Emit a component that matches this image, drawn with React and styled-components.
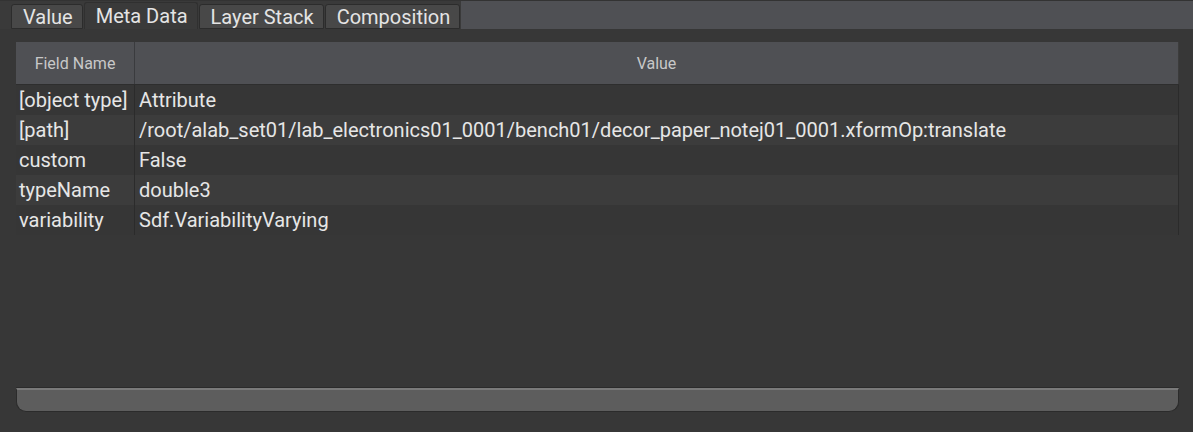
import styled, { createGlobalStyle } from 'styled-components';

const GlobalStyle = createGlobalStyle`
  html, body {
    margin: 0;
    padding: 0;
    background: #373737;
  }
  body {
    font-family: Roboto, "Liberation Sans", sans-serif;
  }
`;

const Page = styled.div`
  width: 1193px;
  height: 432px;
  background: #373737;
  display: flex;
  flex-direction: column;
  overflow: hidden;
`;

const TabBar = styled.div`
  display: flex;
  align-items: flex-end;
  height: 29px;
  padding-left: 11px;
  background: #3a3a3a;
  border-top: 1px solid #333;
  box-sizing: border-box;
`;

const Tab = styled.div`
  height: ${p => (p.$active ? '27px' : '25px')};
  box-sizing: border-box;
  padding: 0 9px 0 11px;
  margin-right: 1px;
  display: flex;
  align-items: center;
  font-size: 20px;
  color: #e4e4e4;
  background: ${p => (p.$active ? '#3a3a3a' : '#484848')};
  border: 1px solid ${p => (p.$active ? '#303030' : '#2c2c2c')};
  border-bottom: ${p => (p.$active ? 'none' : '1px solid #2c2c2c')};
  border-radius: 3px 3px 0 0;
  white-space: nowrap;
`;

const TabFill = styled.div`
  flex: 1;
  align-self: stretch;
  background: #4f5054;
`;

const Body = styled.div`
  flex: 1;
  display: flex;
  flex-direction: column;
  padding: 13px 14px 20px 16px;
  min-height: 0;
`;

const Table = styled.div`
  flex: 1;
  display: flex;
  flex-direction: column;
`;

const HeaderRow = styled.div`
  display: grid;
  grid-template-columns: 119px 1fr;
  height: 42px;
  background: #4f5054;
  border-bottom: 1px solid #2e2e2e;
  box-sizing: content-box;
`;

const HeaderCell = styled.div`
  display: flex;
  align-items: center;
  justify-content: center;
  font-size: 16px;
  color: #c8c8c8;
  border-right: 1px solid ${p => (p.$last ? '#3c3c3c' : '#3a3b3e')};
`;

const Row = styled.div`
  display: grid;
  grid-template-columns: 119px 1fr;
  height: 30px;
  background: ${p => (p.$alt ? '#3c3c3c' : '#363636')};
`;

const Cell = styled.div`
  display: flex;
  align-items: center;
  padding-left: ${p => (p.$first ? '3px' : '4px')};
  font-size: 20px;
  color: #e6e6e6;
  white-space: nowrap;
  border-right: 1px solid #2b2b2b;
`;

const ScrollBar = styled.div`
  height: 24px;
  box-sizing: border-box;
  background: #5d5d5d;
  border: 1px solid #2b2b2b;
  border-top: 2px solid #7a7a7a;
  border-radius: 0 0 10px 10px;
  box-shadow: 0 -1px 0 #2b2b2b;
`;

const rows = [
  ['[object type]', 'Attribute'],
  ['[path]', '/root/alab_set01/lab_electronics01_0001/bench01/decor_paper_notej01_0001.xformOp:translate'],
  ['custom', 'False'],
  ['typeName', 'double3'],
  ['variability', 'Sdf.VariabilityVarying'],
];

const tabs = ['Value', 'Meta Data', 'Layer Stack', 'Composition'];

export default function App() {
  return (
    <Page>
      <GlobalStyle />
      <TabBar>
        {tabs.map(t => (
          <Tab key={t} $active={t === 'Meta Data'}>{t}</Tab>
        ))}
        <TabFill />
      </TabBar>
      <Body>
        <Table>
          <HeaderRow>
            <HeaderCell>Field Name</HeaderCell>
            <HeaderCell $last>Value</HeaderCell>
          </HeaderRow>
          {rows.map(([name, value], i) => (
            <Row key={name} $alt={i % 2 === 1}>
              <Cell $first>{name}</Cell>
              <Cell>{value}</Cell>
            </Row>
          ))}
        </Table>
        <ScrollBar />
      </Body>
    </Page>
  );
}
